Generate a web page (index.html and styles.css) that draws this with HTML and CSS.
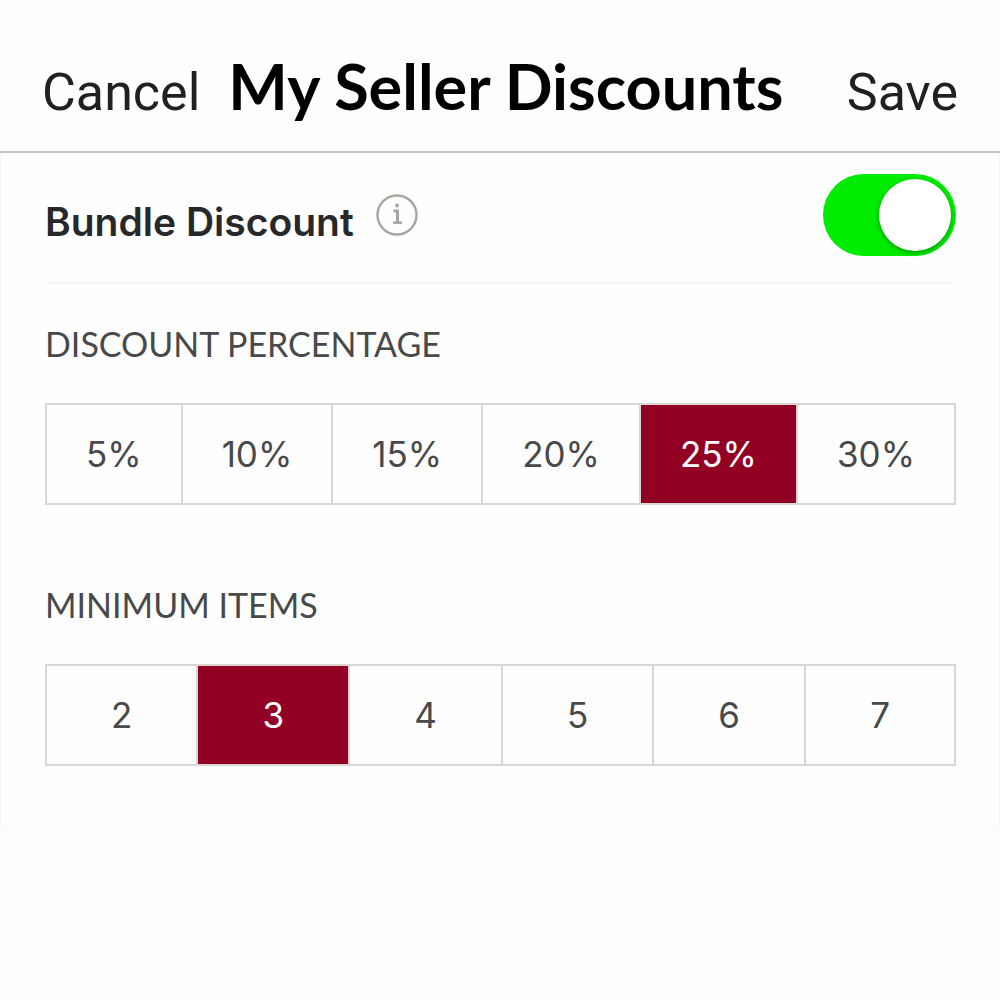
FILE: index.html
```html
<!DOCTYPE html>
<html lang="en">
<head>
    <meta charset="UTF-8">
    <meta name="viewport" content="width=device-width, initial-scale=1.0">
    <title>My Seller Discounts</title>
    <link rel="stylesheet" href="styles.css">
</head>
<body>

    <header class="nav-bar">
        <button type="button" class="nav-button">Cancel</button>
        <h1>My Seller Discounts</h1>
        <button type="submit" form="discountForm" class="nav-button">Save</button>
    </header>

    <form class="panel" id="discountForm">
        <div class="bundle-row">
            <label class="bundle-label" for="bundle">Bundle Discount</label>
            <button type="button" class="info-button" aria-label="About bundle discounts">
                <svg viewBox="0 0 42 42" width="42" height="42" fill="none" stroke="#aaa49f">
                    <circle cx="21" cy="21" r="19.5" stroke-width="2.4"/>
                    <circle cx="21" cy="11.5" r="1.9" fill="#aaa49f" stroke="none"/>
                    <path d="M17.5 17H21.5V28.5" stroke-width="3"/>
                    <path d="M17 28.7H26" stroke-width="2.4"/>
                </svg>
            </button>
            <input type="checkbox" class="toggle" id="bundle" role="switch" checked>
        </div>

        <fieldset class="option-group">
            <legend>DISCOUNT PERCENTAGE</legend>
            <div class="segments">
                <label class="segment"><input type="radio" name="percent" value="5">5%</label>
                <label class="segment"><input type="radio" name="percent" value="10">10%</label>
                <label class="segment"><input type="radio" name="percent" value="15">15%</label>
                <label class="segment"><input type="radio" name="percent" value="20">20%</label>
                <label class="segment"><input type="radio" name="percent" value="25" checked>25%</label>
                <label class="segment"><input type="radio" name="percent" value="30">30%</label>
            </div>
        </fieldset>

        <fieldset class="option-group">
            <legend>MINIMUM ITEMS</legend>
            <div class="segments">
                <label class="segment"><input type="radio" name="items" value="2">2</label>
                <label class="segment"><input type="radio" name="items" value="3" checked>3</label>
                <label class="segment"><input type="radio" name="items" value="4">4</label>
                <label class="segment"><input type="radio" name="items" value="5">5</label>
                <label class="segment"><input type="radio" name="items" value="6">6</label>
                <label class="segment"><input type="radio" name="items" value="7">7</label>
            </div>
        </fieldset>
    </form>

</body>
</html>
```

FILE: styles.css
```css
* {
    box-sizing: border-box;
}
body {
    margin: 0;
    font-family: Inter, sans-serif;
    background-color: #fefefe;
    color: #48494a;
}
button {
    padding: 0;
    border: none;
    background: none;
    cursor: pointer;
}
.nav-bar {
    display: flex;
    align-items: baseline;
    padding: 47px 42px 26px;
    border-bottom: 2px solid #c4c4c4;
}
.nav-bar h1 {
    flex: 1;
    margin: 0 0 0 28px;
    font-family: Lato, sans-serif;
    font-size: 63px;
    font-weight: 700;
    line-height: 78px;
    white-space: nowrap;
    color: #000000;
}
.nav-button {
    font-family: Roboto, sans-serif;
    font-size: 52px;
    font-weight: 400;
    color: #1f2021;
}
.panel {
    padding: 21px 42px 62px 43px;
    border: 2px solid #fdf9f4;
    border-top: none;
}
.bundle-row {
    display: flex;
    align-items: center;
    padding-bottom: 26px;
    border-bottom: 2px solid #f8f6f4;
}
.bundle-label {
    font-size: 39px;
    font-weight: 600;
    line-height: 48px;
    padding-top: 14px;
    color: #27282a;
}
.info-button {
    margin-left: 22px;
}
.info-button svg {
    display: block;
}
.toggle {
    appearance: none;
    display: flex;
    width: 133px;
    height: 82px;
    margin: 0 0 0 auto;
    padding: 5px;
    border-radius: 41px;
    background-color: #dddddd;
    cursor: pointer;
}
.toggle::before {
    content: "";
    width: 72px;
    height: 72px;
    border-radius: 50%;
    background-color: #ffffff;
    box-shadow: 0 2px 5px rgba(0, 0, 0, 0.35);
}
.toggle:checked {
    justify-content: flex-end;
    background-color: #00eb00;
}
.option-group {
    margin: 0;
    padding: 0;
    border: none;
}
.option-group legend {
    padding: 40px 0 39px;
    font-family: Lato, sans-serif;
    font-size: 34px;
    line-height: 40px;
}
.option-group + .option-group {
    margin-top: 40px;
}
.segments {
    display: flex;
    border: 2px solid #d9d6d3;
}
.segment {
    flex: 1 1 auto;
    font-size: 35px;
    line-height: 98px;
    text-align: center;
    cursor: pointer;
}
.segment + .segment {
    border-left: 2px solid #d9d6d3;
}
.segment input {
    position: absolute;
    opacity: 0;
}
.segment:has(input:checked) {
    background-color: #920023;
    color: #ffffff;
}
```
